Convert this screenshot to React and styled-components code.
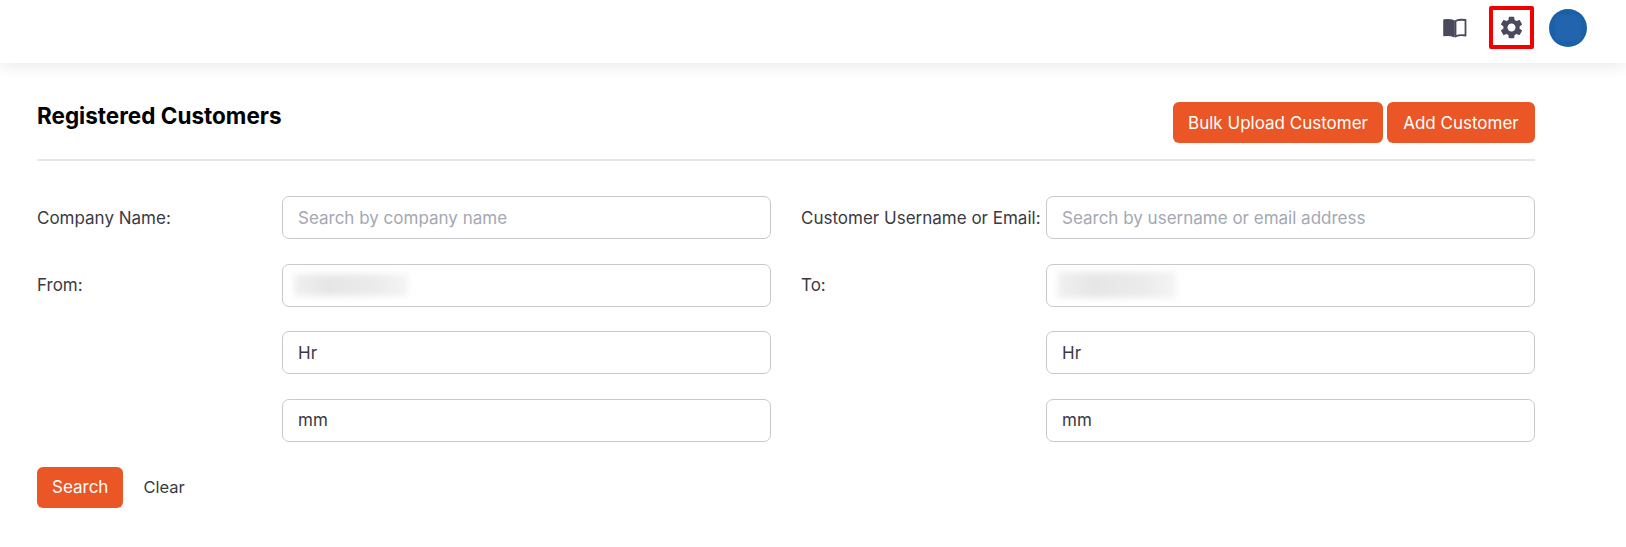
import styled, { createGlobalStyle } from "styled-components";
import { MdSettings } from "react-icons/md";

const GlobalStyle = createGlobalStyle`
  html, body {
    margin: 0;
    padding: 0;
    background: #fff;
  }
  * {
    box-sizing: border-box;
  }
`;

const Page = styled.div`
  width: 1626px;
  height: 547px;
  overflow: hidden;
  background: #fff;
  font-family: Inter, "Open Sans", sans-serif;
  color: #3a3a44;
`;

const Header = styled.header`
  height: 63px;
  background: #fff;
  box-shadow: 0 4px 14px rgba(0, 0, 0, 0.08);
  display: flex;
  align-items: center;
  justify-content: flex-end;
  padding: 0 39px 8px 0;
`;

const BookButton = styled.div`
  display: flex;
  color: #4a4a5e;
  margin-right: 22px;
`;

const SettingsButton = styled.div`
  width: 45px;
  height: 43px;
  border: 4px solid #f50000;
  border-radius: 2px;
  display: flex;
  align-items: center;
  justify-content: center;
  color: #4a4a5e;
  margin-right: 15px;
`;

const Avatar = styled.div`
  width: 38px;
  height: 38px;
  border-radius: 50%;
  background: #1b5fa8;
  display: flex;
  align-items: center;
  justify-content: center;

  &::after {
    content: "";
    width: 26px;
    height: 26px;
    background: #2264ad;
    filter: blur(1px);
  }
`;

const Content = styled.main`
  width: 1498px;
  margin-left: 37px;
`;

const TitleBar = styled.div`
  height: 98px;
  padding-top: 39px;
  border-bottom: 2px solid #e5e7eb;
  display: flex;
  justify-content: space-between;
  align-items: flex-start;
`;

const Title = styled.h1`
  margin: 0;
  font-size: 22.5px;
  line-height: 28px;
  font-weight: 700;
  color: #000;
`;

const ButtonGroup = styled.div`
  display: flex;
  gap: 4px;
`;

const Button = styled.button`
  height: 41px;
  min-width: ${(p) => p.$minWidth || 0}px;
  padding: 0 15px;
  border: none;
  border-radius: 6px;
  background: #ea5625;
  color: #fff;
  font-family: inherit;
  font-size: 17px;
  white-space: nowrap;
`;

const Columns = styled.div`
  display: grid;
  grid-template-columns: 734px 734px;
  column-gap: 30px;
  margin-top: 35px;
`;

const Column = styled.div`
  display: flex;
  flex-direction: column;
  gap: 24.5px;
`;

const Row = styled.div`
  display: grid;
  grid-template-columns: 245px 1fr;
  align-items: center;
  height: 43px;
`;

const Label = styled.label`
  font-size: 17px;
  white-space: nowrap;
`;

const Field = styled.div`
  grid-column: 2;
  height: 43px;
  border: 1px solid #c8c9cc;
  border-radius: 7px;
  padding: 0 15px;
  display: flex;
  align-items: center;
  font-size: 17px;
  color: ${(p) => (p.$placeholder ? "#a3a8b3" : "#3a3a44")};
  white-space: nowrap;
`;

const Blurred = styled.div`
  width: ${(p) => p.$width}px;
  height: ${(p) => p.$height}px;
  margin-left: -4px;
  background: linear-gradient(90deg, #f0f0f0, #e6e6e6 30%, #ebebeb 70%, #f4f4f4);
  filter: blur(3px);
`;

const Actions = styled.div`
  display: flex;
  align-items: center;
  gap: 20px;
  margin-top: 25px;
`;

const ClearLink = styled.span`
  font-size: 16.5px;
`;

const BookIcon = () => (
  <svg width="24" height="20" viewBox="0 0 24 20" fill="none">
    <path d="M11 3C8.500 1.800 4.500 1.500 1 2V17.500c3.500-.5 7.500-.3 10 1V3Z" fill="currentColor" stroke="currentColor" strokeWidth="1.6" strokeLinejoin="round" />
    <path d="M12.500 3c2.500-1.200 6-1.500 10-1V17.500c-3.500-.5-7.500-.3-10 1V3Z" stroke="currentColor" strokeWidth="1.800" strokeLinejoin="round" />
  </svg>
);

const App = () => {
  return (
    <Page>
      <GlobalStyle />
      <Header>
        <BookButton>
          <BookIcon />
        </BookButton>
        <SettingsButton>
          <MdSettings size={27} />
        </SettingsButton>
        <Avatar />
      </Header>
      <Content>
        <TitleBar>
          <Title>Registered Customers</Title>
          <ButtonGroup>
            <Button>Bulk Upload Customer</Button>
            <Button $minWidth={148}>Add Customer</Button>
          </ButtonGroup>
        </TitleBar>
        <Columns>
          <Column>
            <Row>
              <Label>Company Name:</Label>
              <Field $placeholder>Search by company name</Field>
            </Row>
            <Row>
              <Label>From:</Label>
              <Field><Blurred $width={114} $height={22} /></Field>
            </Row>
            <Row><Field>Hr</Field></Row>
            <Row><Field>mm</Field></Row>
          </Column>
          <Column>
            <Row>
              <Label>Customer Username or Email:</Label>
              <Field $placeholder>Search by username or email address</Field>
            </Row>
            <Row>
              <Label>To:</Label>
              <Field><Blurred $width={118} $height={26} /></Field>
            </Row>
            <Row><Field>Hr</Field></Row>
            <Row><Field>mm</Field></Row>
          </Column>
        </Columns>
        <Actions>
          <Button>Search</Button>
          <ClearLink>Clear</ClearLink>
        </Actions>
      </Content>
    </Page>
  );
};

export default App;
